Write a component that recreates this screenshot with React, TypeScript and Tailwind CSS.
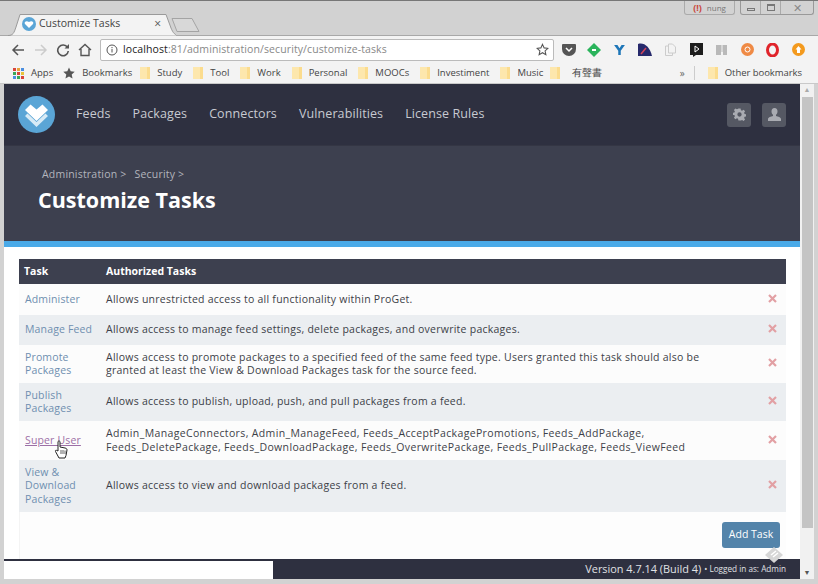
import React from "react";

const F = "[font-family:'Open_Sans',sans-serif]";

function Folder() {
  return (
    <svg width="10" height="12" viewBox="0 0 10 12" className="shrink-0">
      <path d="M0 0h10v12H0z" fill="#fbdc8e" />
      <path d="M0 0h7v12H0z" fill="#fde7ad" />
    </svg>
  );
}

function Bm({ label, cls = "gap-[7px] mr-[11px]" }: { label: string; cls?: string }) {
  return (
    <div className={`flex items-center shrink-0 ${cls}`}>
      <Folder />
      <span className="whitespace-nowrap">{label}</span>
    </div>
  );
}

function Logo() {
  return (
    <svg width="37" height="37" viewBox="0 0 37 37" className="shrink-0">
      <circle cx="18.500" cy="18.500" r="18.500" fill="#5aa5d6" />
      <path d="M7 14l5.500-5.500 6 5 6-5L30 14 18.500 25z" fill="#fff" />
      <path d="M7 20l2.500-2.500 9 8.500 9-8.500L30 20 18.500 31z" fill="#d8ebf6" />
    </svg>
  );
}

const rows: { name: string[]; desc: string[]; h: string; alt: boolean; hover?: boolean; tr: string }[] = [
  { name: ["Administer"], desc: ["Allows unrestricted access to all functionality within ProGet."], h: "h-[31px]", alt: false, tr: "tracking-[0.25px]" },
  { name: ["Manage Feed"], desc: ["Allows access to manage feed settings, delete packages, and overwrite packages."], h: "h-[30px]", alt: true, tr: "tracking-[0.25px]" },
  {
    name: ["Promote", "Packages"],
    desc: [
      "Allows access to promote packages to a specified feed of the same feed type. Users granted this task should also be",
      "granted at least the View & Download Packages task for the source feed.",
    ],
    h: "h-[38px]",
    alt: false,
    tr: "tracking-[0.25px]",
  },
  { name: ["Publish", "Packages"], desc: ["Allows access to publish, upload, push, and pull packages from a feed."], h: "h-[38px]", alt: true, tr: "tracking-[0.25px]" },
  {
    name: ["Super User"],
    desc: [
      "Admin_ManageConnectors, Admin_ManageFeed, Feeds_AcceptPackagePromotions, Feeds_AddPackage,",
      "Feeds_DeletePackage, Feeds_DownloadPackage, Feeds_OverwritePackage, Feeds_PullPackage, Feeds_ViewFeed",
    ],
    h: "h-[39px]",
    alt: false,
    hover: true,
    tr: "tracking-[0.36px]",
  },
  { name: ["View &", "Download", "Packages"], desc: ["Allows access to view and download packages from a feed."], h: "h-[52px]", alt: true, tr: "tracking-[0.25px]" },
];

function X() {
  return (
    <svg width="9" height="9" viewBox="0 0 9 9" className="shrink-0">
      <path d="M1 1l7 7M8 1l-7 7" stroke="#e2a0a4" strokeWidth="2.200" />
    </svg>
  );
}

export default function App() {
  return (
    <div className={`w-[818px] h-[584px] overflow-hidden bg-[#d2d2d2] flex flex-col ${F} relative border-t border-[#777]`}>
      {/* Title / tab strip */}
      <div className="h-[34px] shrink-0 flex items-start pl-[8px] pr-[3px]">
        <div className="relative w-[168px] h-[22px] mt-[12px] shrink-0">
          <svg width="168" height="23" viewBox="0 0 168 23" className="block">
            <path d="M0 22.500C5 22.500 6 20 8 14L12 1.500H158L163 15C165 20 167 22.500 172 22.500" fill="#f3f3f3" stroke="#9a9a9a" />
          </svg>
          <div className="absolute inset-0 flex items-center pl-[14px] pr-[15px] text-[10.500px] text-[#444]">
            <svg width="14" height="14" viewBox="0 0 14 14" className="shrink-0">
              <circle cx="7" cy="7" r="7" fill="#5aa5d6" />
              <path d="M7 11L3 7c-1.500-2 1.500-4 4-2 2.500-2 5.500 0 4 2z" fill="#fff" />
            </svg>
            <span className="ml-[3px] flex-1 whitespace-nowrap">Customize Tasks</span>
            <span className="text-[12px] text-[#555] leading-none">×</span>
          </div>
        </div>
        <svg width="30" height="14" viewBox="0 0 30 14" className="mt-[17px] ml-[-5px] shrink-0">
          <path d="M1 .500H21L28 13.500H6z" fill="#d8d8d8" stroke="#a4a4a4" />
        </svg>
        <div className="flex-1" />
        <div className="flex items-start h-[15px] pr-[1px]">
          <div className="w-[51px] h-[14px] border border-t-0 border-[#aaa] rounded-b-[3px] flex items-center justify-center gap-[5px] text-[8px] text-[#777]">
            <span className="text-[#c9463c] font-bold text-[9px] leading-none">(!)</span>
            <span>nung</span>
          </div>
          <div className="ml-[5px] w-[74px] h-[14px] border border-t-0 border-[#999] rounded-b-[3px] flex">
            <div className="w-[20px] border-r border-[#aaa] flex items-center justify-center">
              <div className="w-[8px] h-[3px] border border-[#777] mt-[3px]" />
            </div>
            <div className="w-[20px] border-r border-[#aaa] flex items-center justify-center">
              <div className="w-[8px] h-[7px] border border-[#777] border-t-2" />
            </div>
            <div className="flex-1 flex items-center justify-center text-[11px] leading-none text-[#888]">✕</div>
          </div>
        </div>
      </div>

      {/* Toolbar */}
      <div className="h-[28px] shrink-0 bg-[#f3f3f3] border-t border-[#a8a8a8] flex items-center pl-[11px]">
        <svg width="14" height="14" viewBox="0 0 14 14" className="shrink-0" fill="none" stroke="#555" strokeWidth="1.500">
          <path d="M13 7H2M7 2L2 7l5 5" />
        </svg>
        <svg width="14" height="14" viewBox="0 0 14 14" className="ml-[9px] shrink-0" fill="none" stroke="#ccc" strokeWidth="1.500">
          <path d="M1 7h11M7 2l5 5-5 5" />
        </svg>
        <svg width="14" height="14" viewBox="0 0 14 14" className="ml-[8px] shrink-0" fill="none" stroke="#555" strokeWidth="1.600">
          <path d="M11.500 4.500A5.300 5.300 0 1 0 12.300 8" />
          <path d="M13 1v4.500H8.500z" fill="#555" stroke="none" />
        </svg>
        <svg width="14" height="14" viewBox="0 0 14 14" className="ml-[8px] shrink-0" fill="none" stroke="#555" strokeWidth="1.400">
          <path d="M1 7l6-5.500L13 7M3 6v6.500h8V6" />
        </svg>
        <div className="ml-[8px] w-[454px] h-[22px] shrink-0 bg-white border border-[#bbb] rounded-[2px] flex items-center pl-[5px] pr-[4px]">
          <svg width="12" height="12" viewBox="0 0 12 12" className="shrink-0" fill="none" stroke="#555" strokeWidth="1">
            <circle cx="6" cy="6" r="5" />
            <path d="M6 5v3.500M6 3v1.200" />
          </svg>
          <span className="ml-[5px] text-[10.500px] text-[#222] tracking-[0.1px]">localhost</span>
          <span className="text-[10.500px] text-[#888] tracking-[0.1px]">:81/administration/security/customize-tasks</span>
          <div className="flex-1" />
          <svg width="13" height="13" viewBox="0 0 24 24" fill="none" stroke="#555" strokeWidth="2">
            <path d="M12 2.500l3 6.500 7 .8-5.200 4.800 1.400 7L12 18l-6.200 3.600 1.400-7L2 9.800 9 9z" />
          </svg>
        </div>
        <div className="flex items-center ml-[2px] shrink-0">
          <div className="w-[25.500px] flex justify-center">
            <svg width="14" height="12" viewBox="0 0 14 12"><path d="M0 1a1 1 0 0 1 1-1h12a1 1 0 0 1 1 1v4a7 7 0 0 1-14 0z" fill="#555" /><path d="M4 4l3 3 3-3" fill="none" stroke="#fff" strokeWidth="1.500" /></svg>
          </div>
          <div className="w-[25.500px] flex justify-center">
            <svg width="14" height="14" viewBox="0 0 14 14"><path d="M7 0l7 7-7 7-7-7z" fill="#2bb45c" /><path d="M5 7h4" stroke="#fff" strokeWidth="2" /></svg>
          </div>
          <div className="w-[25.500px] flex justify-center">
            <svg width="11" height="10" viewBox="0 0 13 12"><path d="M0 0h4l2.500 4L9 0h4L8 7v5H5V7z" fill="#1d76b8" /></svg>
          </div>
          <div className="w-[25.500px] flex justify-center">
            <svg width="14" height="13" viewBox="0 0 14 13"><path d="M0 13V1c6-2 12 3 14 12z" fill="#26296b" /><path d="M3 11l5-6" stroke="#d3455a" strokeWidth="1.500" /></svg>
          </div>
          <div className="w-[25.500px] flex justify-center">
            <svg width="11" height="13" viewBox="0 0 11 13" fill="none" stroke="#ccc" strokeWidth="1"><path d="M3.500 1h4l3 3v6h-7zM3.500 3H.5v9.500h7V10" /></svg>
          </div>
          <div className="w-[25.500px] flex justify-center">
            <svg width="13" height="14" viewBox="0 0 13 14"><rect width="13" height="12" fill="#1c1c1c" /><path d="M3 14l3-2H3z" fill="#1c1c1c" /><path d="M5 3l4 3-4 3z" fill="none" stroke="#fff" /></svg>
          </div>
          <div className="w-[25.500px] flex justify-center">
            <svg width="11" height="10" viewBox="0 0 11 10"><path d="M0 0h11v10H7V7H5v3H0z" fill="#b9b9b9" /><path d="M6 0v7" stroke="#f3f3f3" /></svg>
          </div>
          <div className="w-[25.500px] flex justify-center">
            <svg width="13" height="13" viewBox="0 0 13 13"><circle cx="6.500" cy="6.500" r="6.500" fill="#ef8a45" /><circle cx="6.500" cy="6.500" r="2.500" fill="none" stroke="#fff" /></svg>
          </div>
          <div className="w-[25.500px] flex justify-center">
            <svg width="13" height="14" viewBox="0 0 13 14"><ellipse cx="6.500" cy="7" rx="5" ry="6" fill="none" stroke="#e0242b" strokeWidth="3" /></svg>
          </div>
          <div className="w-[25.500px] flex justify-center">
            <svg width="13" height="13" viewBox="0 0 13 13"><circle cx="6.500" cy="6.500" r="6.500" fill="#f39a1e" /><path d="M6.500 3l3 3.500H8V10H5V6.500H3.500z" fill="#fff" /></svg>
          </div>
        </div>
      </div>

      {/* Bookmarks */}
      <div className="h-[21px] shrink-0 bg-[#f3f3f3] border-b border-[#c9c9c9] flex items-center pl-[13px] pr-[16px] text-[9.500px] text-[#444]">
        <svg width="11" height="11" viewBox="0 0 11 11" className="shrink-0">
          <rect x="0" y="0" width="3" height="3" fill="#d9453a" />
          <rect x="4" y="0" width="3" height="3" fill="#e8a33a" />
          <rect x="8" y="0" width="3" height="3" fill="#4a8ee0" />
          <rect x="0" y="4" width="3" height="3" fill="#3aa757" />
          <rect x="4" y="4" width="3" height="3" fill="#d9453a" />
          <rect x="8" y="4" width="3" height="3" fill="#e8c33a" />
          <rect x="0" y="8" width="3" height="3" fill="#4a8ee0" />
          <rect x="4" y="8" width="3" height="3" fill="#3aa757" />
          <rect x="8" y="8" width="3" height="3" fill="#d9453a" />
        </svg>
        <span className="ml-[7px]">Apps</span>
        <svg width="12" height="12" viewBox="0 0 24 24" className="ml-[10px] shrink-0">
          <path d="M12 1l3.400 7.500 8 .9-6 5.400 1.700 8L12 18.800 4.900 22.800l1.700-8-6-5.400 8-.9z" fill="#555" />
        </svg>
        <span className="ml-[7px] mr-[8px]">Bookmarks</span>
        <Bm label="Study" />
        <Bm label="Tool" />
        <Bm label="Work" />
        <Bm label="Personal" />
        <Bm label="MOOCs" />
        <Bm label="Investiment" />
        <Bm label="Music" cls="gap-[7px] mr-[7px]" />
        <Bm label="有聲書" cls="gap-[12px]" />
        <div className="flex-1" />
        <span className="text-[#666] text-[10px] mr-[9px]">»</span>
        <div className="w-px h-[14px] bg-[#ccc] mr-[13px]" />
        <Bm label="Other bookmarks" cls="gap-[7px] tracking-[-0.05px]" />
      </div>

      {/* Page + scrollbar */}
      <div className="flex-1 flex pl-[4px] pr-[4px] pb-[5px] bg-[#d2d2d2] min-h-0">
        <div className="w-[796px] flex flex-col min-h-0 bg-white">
          <div className="h-[61px] shrink-0 bg-[#2e3040] flex items-center pl-[14px] pr-[14px] text-[12.500px] text-[#c7cad1] tracking-[0.1px]">
            <Logo />
            <span className="ml-[21px]">Feeds</span>
            <span className="ml-[22px]">Packages</span>
            <span className="ml-[22px]">Connectors</span>
            <span className="ml-[22px]">Vulnerabilities</span>
            <span className="ml-[22px]">License Rules</span>
            <div className="flex-1" />
            <div className="w-[24px] h-[24px] rounded-[3px] bg-[#555863] flex items-center justify-center">
              <svg width="13" height="13" viewBox="0 0 24 24">
                <path fillRule="evenodd" d="M10 1h4l.7 3.200 2 .9 2.800-1.800 2.800 2.800-1.800 2.800.9 2 3.200.7v4l-3.200.7-.9 2 1.800 2.800-2.800 2.800-2.800-1.800-2 .9L14 23h-4l-.7-3.200-2-.9-2.800 1.800-2.800-2.800 1.800-2.800-.9-2L-.6 13V9l3.200-.7.9-2L1.700 3.500l2.800-2.800 2.800 1.800 2-.9zM12 8a4 4 0 1 0 0 8 4 4 0 0 0 0-8z" fill="#a9abb2" />
              </svg>
            </div>
            <div className="ml-[11px] w-[24px] h-[24px] rounded-[3px] bg-[#555863] flex items-center justify-center">
              <svg width="13" height="13" viewBox="0 0 13 13">
                <path d="M6.500 0c2 0 3 1.500 3 3.500 0 1.500-.7 2.700-1.500 3.300v1.200c2 .7 5 1.300 5 3V13H0v-2c0-1.700 3-2.300 5-3V6.800C4.200 6.200 3.500 5 3.500 3.500c0-2 1-3.500 3-3.500z" fill="#a9abb2" />
              </svg>
            </div>
          </div>

          <div className="h-[96px] shrink-0 bg-[#3d404f] pl-[34px] pt-[22px] border-t border-[#343644]">
            <div className="flex text-[10.500px] text-[#b3b5bd] pl-[4px] leading-[12px] tracking-[0.2px]">
              <span>Administration &gt;</span>
              <span className="ml-[8px]">Security &gt;</span>
            </div>
            <div className="mt-[7px] text-[21.500px] leading-[26px] font-bold text-white">Customize Tasks</div>
          </div>
          <div className="h-[6px] shrink-0 bg-[#4aaae8]" />

          <div className="flex-1 min-h-0 pt-[12px] pl-[15px] pr-[14px] bg-white flex flex-col">
            <div className="h-[25px] shrink-0 bg-[#3d404f] text-white font-bold text-[10.500px] flex items-center">
              <div className="w-[87px] pl-[5px]">Task</div>
              <div>Authorized Tasks</div>
            </div>
            {rows.map((r) => (
              <div key={r.name.join()} className={`${r.h} shrink-0 flex items-center text-[10.500px] leading-[13.500px] ${r.alt ? "bg-[#ebeef1]" : "bg-[#fcfcfc]"}`}>
                <div className={`w-[87px] pl-[6px] relative tracking-[0.15px] ${r.hover ? "text-[#9c6fa6]" : "text-[#6f8fb0]"}`}>
                  {r.name.map((n) => (
                    <div key={n} className={r.hover ? "underline" : ""}>{n}</div>
                  ))}
                  {r.hover && (
                    <svg width="14" height="19" viewBox="0 0 14 19" className="absolute left-[35px] top-[6px]">
                      <path d="M4 1.500c1-1 2-.5 2 .5v5l5 1c1.500.3 2 1 2 2l-1 5.500-1 2.500H5l-3.500-6.500c-.5-1 .5-1.700 1.300-1L4 11z" fill="#fff" stroke="#222" strokeWidth="1" />
                      <path d="M7 10v4M9 10v4M11 10.500V14" stroke="#222" strokeWidth=".7" />
                    </svg>
                  )}
                </div>
                <div className={`flex-1 text-[#3c3f48] whitespace-nowrap ${r.tr}`}>
                  {r.desc.map((d) => (
                    <div key={d}>{d}</div>
                  ))}
                </div>
                <div className="pr-[9px] pb-[3px] flex items-center">
                  <X />
                </div>
              </div>
            ))}
            <div className="flex-1 bg-[#fdfdfd] relative border-l border-[#f4f4f4] flex justify-end pt-[10px] pr-[6px]">
              <div className="w-[58px] h-[26px] rounded-[3px] bg-[#5484aa] text-white text-[10.500px] flex items-center justify-center">Add Task</div>
            </div>
          </div>

          <div className="shrink-0 flex flex-col relative">
            <div className="h-[2px] bg-[#2e3040]" />
            <div className="flex h-[18px]">
              <div className="w-[269px] bg-white" />
              <div className="flex-1 bg-[#2e3040] text-[#e0e2e6] flex items-center justify-end pr-[14px] whitespace-nowrap pb-[1px]">
                <span className="text-[10.900px]">Version 4.7.14 (Build 4)</span>
                <span className="text-[8.200px] ml-[3px]">• Logged in as: Admin</span>
              </div>
            </div>
            <svg width="20" height="18" viewBox="0 0 20 18" className="absolute right-[16px] top-[-13px]">
              <path d="M10 1l9 8-9 8-9-8z" fill="#d6d6d6" />
              <path d="M7 9l5-4M9 11l5-4" stroke="#fff" strokeWidth="1.500" />
            </svg>
          </div>
        </div>

        <div className="w-[14px] shrink-0 bg-[#f1f1f1] flex flex-col items-center">
          <div className="h-[13px] text-[7px] leading-[12px] text-[#aaa]">▲</div>
          <div className="w-[11px] h-[431px] bg-[#c4c4c4]" />
          <div className="flex-1" />
          <div className="h-[12px] text-[7px] leading-[12px] text-[#555]">▼</div>
        </div>
      </div>
    </div>
  );
}
